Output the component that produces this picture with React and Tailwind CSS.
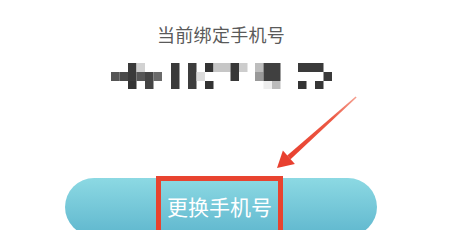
import React from "react";

const cells = [
  // first group
  { x: 0, y: 9, w: 8.5, h: 9, c: "#555" },
  { x: 8.5, y: 9, w: 8.5, h: 9, c: "#4a4a4a" },
  { x: 17, y: 9, w: 8.5, h: 9, c: "#3a3a3a" },
  { x: 25.5, y: 9, w: 8.5, h: 9, c: "#575757" },
  { x: 34, y: 9, w: 8.5, h: 9, c: "#454545" },
  { x: 42.5, y: 9, w: 8.5, h: 9, c: "#6a6a6a" },
  { x: 17, y: 0, w: 8.5, h: 9, c: "#3a3a3a" },
  { x: 25.5, y: 0, w: 8.5, h: 9, c: "#d2d2d2" },
  { x: 17, y: 18, w: 8.5, h: 8, c: "#333" },
  { x: 34, y: 18, w: 8.5, h: 8, c: "#444" },
  // second group
  { x: 60, y: 0, w: 8.5, h: 26, c: "#3a3a3a" },
  { x: 77, y: 0, w: 8.5, h: 26, c: "#3d3d3d" },
  { x: 85.5, y: 9, w: 8.5, h: 9, c: "#dcdcdc" },
  { x: 94, y: 0, w: 8.5, h: 9, c: "#333" },
  { x: 94, y: 18, w: 8.5, h: 8, c: "#333" },
  { x: 102.5, y: 0, w: 17, h: 9, c: "#c6c6c6" },
  { x: 119.5, y: 0, w: 8.5, h: 18, c: "#383838" },
  { x: 128, y: 0, w: 8.5, h: 9, c: "#cdcdcd" },
  // third group
  { x: 144, y: 0, w: 8.5, h: 9, c: "#bdbdbd" },
  { x: 144, y: 9, w: 8.5, h: 9, c: "#999" },
  { x: 152.5, y: 0, w: 17, h: 18, c: "#404040" },
  { x: 152.5, y: 18, w: 8.5, h: 8, c: "#eeeeee" },
  { x: 161, y: 18, w: 8.5, h: 8, c: "#bbbbbb" },
  // fourth group
  { x: 187, y: 0, w: 25.5, h: 9, c: "#3a3a3a" },
  { x: 212.5, y: 9, w: 8.5, h: 9, c: "#3a3a3a" },
  { x: 187, y: 18, w: 8.5, h: 8, c: "#333" },
  { x: 204, y: 18, w: 8.5, h: 8, c: "#363636" },
];

const Mosaic = () => (
  <svg width="222" height="26" viewBox="0 0 222 26" className="block">
    {cells.map((r, i) => (
      <rect key={i} x={r.x} y={r.y} width={r.w} height={r.h} fill={r.c} />
    ))}
  </svg>
);

const Arrow = () => (
  <svg
    width="449"
    height="230"
    viewBox="0 0 449 230"
    className="absolute left-0 top-0 pointer-events-none"
  >
    <defs>
      <linearGradient id="shaft" x1="356" y1="97" x2="288" y2="158" gradientUnits="userSpaceOnUse">
        <stop offset="0" stopColor="#f5a090" />
        <stop offset="0.35" stopColor="#ec5a45" />
        <stop offset="1" stopColor="#e8402f" />
      </linearGradient>
    </defs>
    <polygon points="290.6,159.2 287.2,155.4 355.6,96.5 356.6,97.5" fill="url(#shaft)" />
    <polygon points="277,168 282.9,150.6 294.9,164" fill="#e8402f" />
  </svg>
);

export default function App() {
  return (
    <div
      className="relative w-[449px] h-[230px] overflow-hidden bg-white flex flex-col"
      style={{ fontFamily: '"Noto Sans CJK SC", "Noto Sans", sans-serif' }}
    >
      <p className="ml-[157px] mt-[22px] text-[18px] leading-[24px] text-[#5a5a5a] tracking-[0.3px]">
        当前绑定手机号
      </p>

      <div className="ml-[111px] mt-[17px]">
        <Mosaic />
      </div>

      <div className="ml-[65px] mt-[89px] w-[312px] h-[60px] rounded-full bg-gradient-to-b from-[#8cd9e3] to-[#5fb7ce] flex">
        <span className="ml-[91px] -mt-[2px] w-[127px] h-[60px] border-[5px] border-[#e8432f] flex justify-center pt-[11px]">
          <span className="text-[21px] leading-[28px] text-white">更换手机号</span>
        </span>
      </div>

      <Arrow />
    </div>
  );
}
